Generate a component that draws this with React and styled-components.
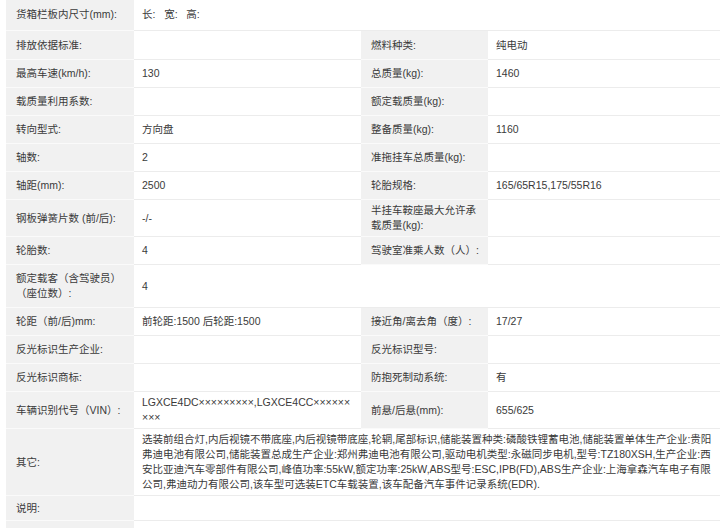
import React from "react";
import styled, { createGlobalStyle } from "styled-components";

const Global = createGlobalStyle`
  body { margin: 0; background: #fff; font-family: "Liberation Sans", "Noto Sans CJK SC", sans-serif; }
`;

const Table = styled.div`
  display: grid;
  grid-template-columns: 128px 227px 127px 1fr;
  margin-left: 6px;
  margin-top: -1px;
  font-size: 10.5px;
  color: #3a3a3a;
  line-height: 15px;
`;

const Cell = styled.div`
  display: flex;
  align-items: center;
  min-height: ${p => p.$h || 28}px;
  padding: 3px 8px 3px ${p => (p.$label ? 10 : 8)}px;
  box-sizing: border-box;
  background: ${p => (p.$label ? "#f1f1f1" : "#fff")};
  border-bottom: 1px solid ${p => (p.$label ? "#fafafa" : "#ececec")};
  grid-column: ${p => (p.$span ? "span 3" : "auto")};
  word-break: break-all;
  white-space: pre-wrap;
`;

const rows = [
  { l: "货箱栏板内尺寸(mm):", v: "长:   宽:   高:", full: true, h: 32 },
  { l: "排放依据标准:", v: "", l2: "燃料种类:", v2: "纯电动", h: 29 },
  { l: "最高车速(km/h):", v: "130", l2: "总质量(kg):", v2: "1460" },
  { l: "载质量利用系数:", v: "", l2: "额定载质量(kg):", v2: "" },
  { l: "转向型式:", v: "方向盘", l2: "整备质量(kg):", v2: "1160" },
  { l: "轴数:", v: "2", l2: "准拖挂车总质量(kg):", v2: "" },
  { l: "轴距(mm):", v: "2500", l2: "轮胎规格:", v2: "165/65R15,175/55R16" },
  { l: "钢板弹簧片数 (前/后):", v: "-/-", l2: "半挂车鞍座最大允许承载质量(kg):", v2: "", h: 37 },
  { l: "轮胎数:", v: "4", l2: "驾驶室准乘人数（人）:", v2: "" },
  { l: "额定载客（含驾驶员）（座位数）:", v: "4", full: true, h: 43 },
  { l: "轮距（前/后)mm:", v: "前轮距:1500 后轮距:1500", l2: "接近角/离去角（度）:", v2: "17/27" },
  { l: "反光标识生产企业:", v: "", l2: "反光标识型号:", v2: "" },
  { l: "反光标识商标:", v: "", l2: "防抱死制动系统:", v2: "有" },
  { l: "车辆识别代号（VIN）:", v: "LGXCE4DC×××××××××,LGXCE4CC×××××××××", l2: "前悬/后悬(mm):", v2: "655/625", h: 36 },
  {
    l: "其它:",
    v: "选装前组合灯,内后视镜不带底座,内后视镜带底座,轮辋,尾部标识,储能装置种类:磷酸铁锂蓄电池,储能装置单体生产企业:贵阳弗迪电池有限公司,储能装置总成生产企业:郑州弗迪电池有限公司,驱动电机类型:永磁同步电机,型号:TZ180XSH,生产企业:西安比亚迪汽车零部件有限公司,峰值功率:55kW,额定功率:25kW,ABS型号:ESC,IPB(FD),ABS生产企业:上海拿森汽车电子有限公司,弗迪动力有限公司,该车型可选装ETC车载装置,该车配备汽车事件记录系统(EDR).",
    full: true,
    h: 67,
  },
  { l: "说明:", v: "", full: true, h: 25 },
  { l: "", v: "", full: true, h: 20 },
];

export default function App() {
  return (
    <>
      <Global />
      <Table>
        {rows.map((r, i) => (
          <React.Fragment key={i}>
            <Cell $label $h={r.h}>{r.l}</Cell>
            {r.full ? (
              <Cell $span $h={r.h}>{r.v}</Cell>
            ) : (
              <>
                <Cell $h={r.h}>{r.v}</Cell>
                <Cell $label $h={r.h}>{r.l2}</Cell>
                <Cell $h={r.h}>{r.v2}</Cell>
              </>
            )}
          </React.Fragment>
        ))}
      </Table>
    </>
  );
}
